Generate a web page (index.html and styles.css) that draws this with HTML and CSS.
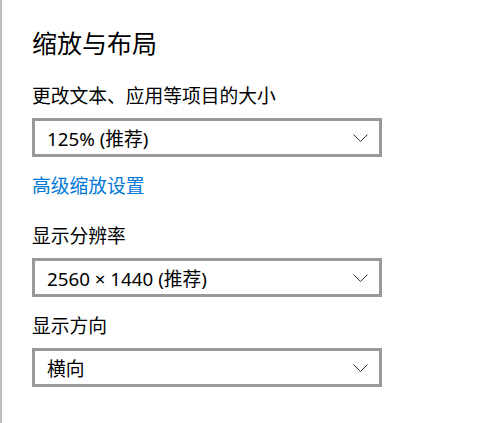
FILE: index.html
```html
<!DOCTYPE html>
<html lang="zh-CN">
<head>
    <meta charset="UTF-8">
    <title>缩放与布局</title>
    <link rel="stylesheet" href="styles.css">
</head>
<body>
    <div class="page">
        <h1 class="title">缩放与布局</h1>

        <div class="label">更改文本、应用等项目的大小</div>
        <div class="combo">
            <span class="value">125% (推荐)</span>
            <svg class="chevron" width="15" height="8" viewBox="0 0 15 8">
                <polyline points="0.5,0.5 7.5,7.5 14.5,0.5" fill="none" stroke="#333" stroke-width="1"/>
            </svg>
        </div>
        <a class="link" href="#">高级缩放设置</a>

        <div class="label">显示分辨率</div>
        <div class="combo">
            <span class="value">2560 × 1440 (推荐)</span>
            <svg class="chevron" width="15" height="8" viewBox="0 0 15 8">
                <polyline points="0.5,0.5 7.5,7.5 14.5,0.5" fill="none" stroke="#333" stroke-width="1"/>
            </svg>
        </div>

        <div class="label label-tight">显示方向</div>
        <div class="combo">
            <span class="value">横向</span>
            <svg class="chevron" width="15" height="8" viewBox="0 0 15 8">
                <polyline points="0.5,0.5 7.5,7.5 14.5,0.5" fill="none" stroke="#333" stroke-width="1"/>
            </svg>
        </div>
    </div>
</body>
</html>
```

FILE: styles.css
```css
html, body {
    margin: 0;
    height: 100%;
    background: #fff;
}
body {
    font-family: 'Noto Sans', 'Noto Sans CJK SC', sans-serif;
    color: #000;
}
.page {
    box-sizing: border-box;
    min-height: 100%;
    border-left: 2px solid #bcbcbc;
    padding: 26px 0 0 30px;
}
.title {
    font-size: 25px;
    font-weight: 400;
    line-height: 34px;
    margin: 0 0 23px;
}
.label {
    font-size: 18.75px;
    line-height: 26px;
    margin-bottom: 9px;
}
.label-tight {
    margin-top: 16px;
}
.combo {
    box-sizing: border-box;
    width: 350px;
    height: 39px;
    border: 3px solid #999;
    display: flex;
    align-items: center;
    justify-content: space-between;
    padding: 0 11px 0 12px;
    font-size: 18.75px;
}
.chevron {
    display: block;
}
.link {
    display: block;
    width: max-content;
    font-size: 18.75px;
    line-height: 26px;
    color: #0078d7;
    text-decoration: none;
    margin: 16px 0 24px;
}
```
